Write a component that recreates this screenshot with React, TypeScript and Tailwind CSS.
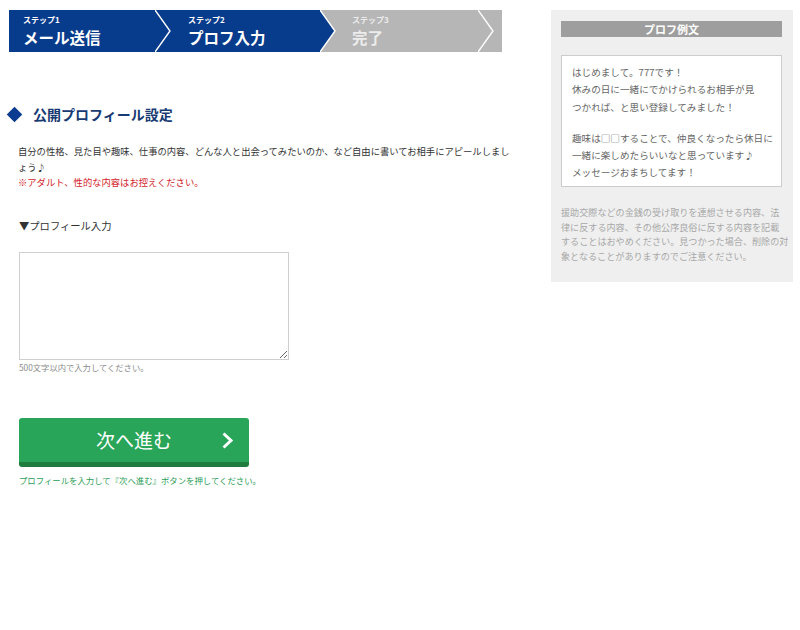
import React from 'react';

const Chevron = ({ fill, className }: { fill?: string; className: string }) => (
  <svg className={className} width="16" height="42" viewBox="0 0 16 42">
    {fill && <polygon points="0,0 15,21 0,42" fill={fill} />}
    <polyline points="0,0 15,21 0,42" fill="none" stroke="#fff" strokeWidth="1.4" />
  </svg>
);

const steps = [
  { no: 'ステップ1', label: 'メール送信', w: 'w-[146px]', pl: 'pl-[14px]', active: true },
  { no: 'ステップ2', label: 'プロフ入力', w: 'w-[165px]', pl: 'pl-[33px]', active: true },
  { no: 'ステップ3', label: '完了', w: 'w-[182px]', pl: 'pl-[32px]', active: false },
];

export default function App() {
  return (
    <div className="flex items-start pt-[10px] bg-white min-h-[630px] font-['Noto_Sans_CJK_JP',sans-serif]">
      {/* 左カラム */}
      <div className="w-[542px] shrink-0">
        {/* ステップ */}
        <div className="flex ml-[9px] h-[42px]">
          {steps.map((s, i) => (
            <div
              key={s.no}
              className={`relative ${s.w} ${s.pl} h-full ${s.active ? 'bg-[#073b8c] text-white' : 'bg-[#b6b6b6] text-[#ececec]'}`}
            >
              <div className="pt-[4px] text-[8px] font-bold leading-[12px]">{s.no}</div>
              <div className="text-[15.5px] font-bold leading-[22px]">{s.label}</div>
              {i < 2 && <Chevron fill="#073b8c" className="absolute left-full top-0 z-10" />}
              {i === 2 && <Chevron className="absolute left-[158px] top-0 z-10" />}
            </div>
          ))}
        </div>

        {/* 見出し */}
        <div className="flex items-center mt-[52px] h-[20px] ml-[9px]">
          <span className="w-[11px] h-[11px] bg-[#0c3c8f] rotate-45" />
          <h2 className="ml-[13px] text-[14px] font-bold text-[#183a73] leading-[20px]">公開プロフィール設定</h2>
        </div>

        <div className="mt-[20px] ml-[18px] text-[9.3px] leading-[15.5px] text-[#333] whitespace-nowrap">
          <p>
            自分の性格、見た目や趣味、仕事の内容、どんな人と出会ってみたいのか、など自由に書いてお相手にアピールしまし
            <br />
            ょう♪
          </p>
          <p className="text-[#d2232a]">※アダルト、性的な内容はお控えください。</p>
        </div>

        <div className="mt-[27px] ml-[19px] text-[10.3px] leading-[16px] text-[#333]">▼プロフィール入力</div>

        <textarea className="block mt-[18px] ml-[19px] w-[270px] h-[108px] border border-[#cfcfcf] bg-white outline-none" />

        <div className="mt-[1px] ml-[19px] text-[8.3px] leading-[12px] text-[#8a8a8a]">500文字以内で入力してください。</div>

        <button className="relative block mt-[45px] ml-[19px] w-[230px] h-[49px] bg-[#28a558] border-b-[5px] border-[#1d7c3e] rounded-[3px] text-white text-[19px] leading-[44px]">
          次へ進む
          <svg className="absolute right-[15px] top-[14px]" width="13" height="17" viewBox="0 0 13 17">
            <polyline points="2.5,1.5 10,8.5 2.5,15.5" fill="none" stroke="#fff" strokeWidth="3" />
          </svg>
        </button>

        <div className="mt-[7px] ml-[19px] text-[8.4px] leading-[12px] text-[#2a9d55] whitespace-nowrap">
          プロフィールを入力して『次へ進む』ボタンを押してください。
        </div>
      </div>

      {/* 右カラム */}
      <aside className="ml-[9px] w-[242px] bg-[#efefef] pt-[11px] pl-[10px] pr-[11px] pb-[18px]">
        <div className="h-[16px] bg-[#9e9e9e] text-white text-[11px] font-bold leading-[16px] text-center">プロフ例文</div>
        <div className="mt-[18px] h-[132px] bg-white border border-[#cccccc] pt-[8px] pl-[10px] text-[9.6px] leading-[17.3px] text-[#666] whitespace-nowrap">
          <p>
            はじめまして。777です！
            <br />
            休みの日に一緒にでかけられるお相手が見
            <br />
            つかれば、と思い登録してみました！
          </p>
          <p className="mt-[14px]">
            趣味は□□することで、仲良くなったら休日に
            <br />
            一緒に楽しめたらいいなと思っています♪
            <br />
            メッセージおまちしてます！
          </p>
        </div>
        <p className="mt-[18px] text-[9.1px] leading-[14.7px] text-[#a8a8a8] whitespace-nowrap">
          援助交際などの金銭の受け取りを連想させる内容、法
          <br />
          律に反する内容、その他公序良俗に反する内容を記載
          <br />
          することはおやめください。見つかった場合、削除の対
          <br />
          象となることがありますのでご注意ください。
        </p>
      </aside>
    </div>
  );
}
